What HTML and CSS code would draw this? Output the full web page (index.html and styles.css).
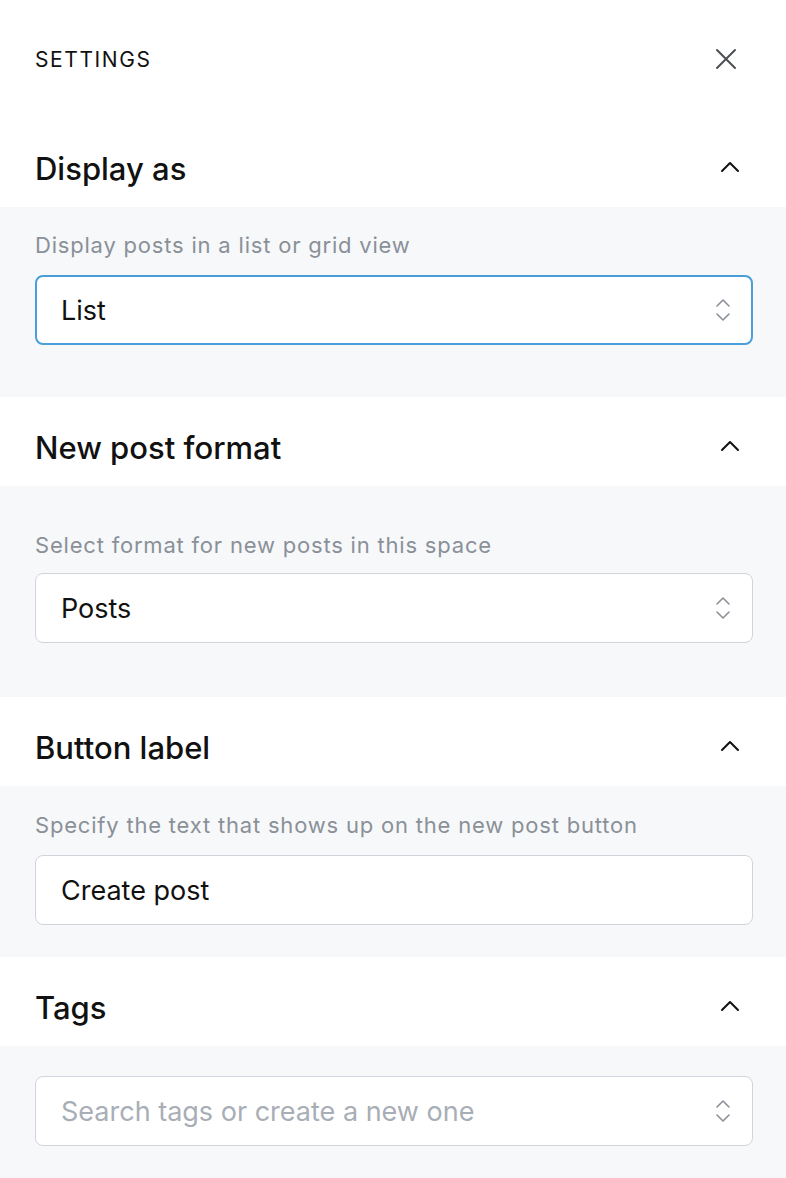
FILE: index.html
```html
<!DOCTYPE html>
<html lang="en">
<head>
    <meta charset="UTF-8">
    <meta name="viewport" content="width=device-width, initial-scale=1.0">
    <title>Settings</title>
    <link rel="stylesheet" href="styles.css">
</head>
<body>
    <div class="panel">
        <div class="panel-top">
            <span class="panel-title">SETTINGS</span>
            <button class="close-btn" type="button" aria-label="Close">
                <svg width="24" height="24" viewBox="0 0 24 24" fill="none" stroke="#4b5056" stroke-width="2" stroke-linecap="round">
                    <path d="M3 3L21 21M21 3L3 21"/>
                </svg>
            </button>
        </div>

        <div class="section">
            <div class="section-head">
                <h3>Display as</h3>
                <svg class="chevron" width="20" height="12" viewBox="0 0 20 12" fill="none" stroke="#111" stroke-width="2" stroke-linecap="round" stroke-linejoin="round">
                    <path d="M2 10L10 2L18 10"/>
                </svg>
            </div>
            <div class="section-body body-1">
                <label class="hint" for="display-as">Display posts in a list or grid view</label>
                <div class="field focused">
                    <select id="display-as">
                        <option>List</option>
                        <option>Grid</option>
                    </select>
                    <svg class="updown" width="16" height="24" viewBox="0 0 16 24" fill="none" stroke="#8b9098" stroke-width="1.6" stroke-linecap="round" stroke-linejoin="round">
                        <path d="M2 8L8 2L14 8M2 16L8 22L14 16"/>
                    </svg>
                </div>
            </div>
        </div>

        <div class="section">
            <div class="section-head">
                <h3>New post format</h3>
                <svg class="chevron" width="20" height="12" viewBox="0 0 20 12" fill="none" stroke="#111" stroke-width="2" stroke-linecap="round" stroke-linejoin="round">
                    <path d="M2 10L10 2L18 10"/>
                </svg>
            </div>
            <div class="section-body body-2">
                <label class="hint" for="post-format">Select format for new posts in this space</label>
                <div class="field">
                    <select id="post-format">
                        <option>Posts</option>
                        <option>Questions</option>
                    </select>
                    <svg class="updown" width="16" height="24" viewBox="0 0 16 24" fill="none" stroke="#8b9098" stroke-width="1.6" stroke-linecap="round" stroke-linejoin="round">
                        <path d="M2 8L8 2L14 8M2 16L8 22L14 16"/>
                    </svg>
                </div>
            </div>
        </div>

        <div class="section">
            <div class="section-head">
                <h3>Button label</h3>
                <svg class="chevron" width="20" height="12" viewBox="0 0 20 12" fill="none" stroke="#111" stroke-width="2" stroke-linecap="round" stroke-linejoin="round">
                    <path d="M2 10L10 2L18 10"/>
                </svg>
            </div>
            <div class="section-body body-3">
                <label class="hint" for="button-label">Specify the text that shows up on the new post button</label>
                <div class="field">
                    <input type="text" id="button-label" value="Create post">
                </div>
            </div>
        </div>

        <div class="section">
            <div class="section-head">
                <h3>Tags</h3>
                <svg class="chevron" width="20" height="12" viewBox="0 0 20 12" fill="none" stroke="#111" stroke-width="2" stroke-linecap="round" stroke-linejoin="round">
                    <path d="M2 10L10 2L18 10"/>
                </svg>
            </div>
            <div class="section-body body-4">
                <div class="field">
                    <input type="text" id="tags" placeholder="Search tags or create a new one">
                    <svg class="updown" width="16" height="24" viewBox="0 0 16 24" fill="none" stroke="#8b9098" stroke-width="1.6" stroke-linecap="round" stroke-linejoin="round">
                        <path d="M2 8L8 2L14 8M2 16L8 22L14 16"/>
                    </svg>
                </div>
            </div>
        </div>
    </div>
</body>
</html>
```

FILE: styles.css
```css
body {
    margin: 0;
    font-family: Inter, "Noto Sans", sans-serif;
    background-color: #fff;
    color: #111;
}

.panel {
    width: 786px;
}

.panel-top {
    display: flex;
    justify-content: space-between;
    align-items: center;
    height: 118px;
    padding: 0 48px 0 35px;
    box-sizing: border-box;
}

.panel-title {
    font-size: 21px;
    letter-spacing: 1.6px;
}

.close-btn {
    background: none;
    border: none;
    padding: 0;
    display: flex;
    cursor: pointer;
}

.section-head {
    display: flex;
    justify-content: space-between;
    align-items: center;
    height: 89px;
    padding: 12px 46px 0 35px;
    box-sizing: border-box;
}

.section-head h3 {
    margin: 0;
    font-size: 31px;
    font-weight: 500;
    line-height: 35px;
}

.chevron {
    margin-top: -4px;
}

.section-body {
    background-color: #f7f8fa;
    padding: 23px 33px 52px 35px;
}

.body-2 {
    padding-top: 44px;
    padding-bottom: 54px;
}

.body-3 {
    padding-top: 24px;
    padding-bottom: 32px;
}

.body-4 {
    padding-top: 30px;
    padding-bottom: 32px;
}

.hint {
    display: block;
    font-size: 22px;
    letter-spacing: 0.8px;
    line-height: 30px;
    color: #8a9098;
    margin-bottom: 15px;
}

.body-2 .hint {
    margin-bottom: 13px;
}

.field {
    display: flex;
    align-items: center;
    height: 70px;
    box-sizing: border-box;
    border: 1px solid #d1d5db;
    border-radius: 8px;
    background-color: #fff;
    padding: 0 21px 0 25px;
}

.field.focused {
    border: 2px solid #4a9ed9;
    padding-left: 24px;
    padding-right: 20px;
}

select, input {
    flex: 1;
    border: none;
    outline: none;
    background: transparent;
    appearance: none;
    -webkit-appearance: none;
    font-family: inherit;
    font-size: 27px;
    color: #111;
    padding: 0;
    margin: 0;
}

input::placeholder {
    color: #a8aeb6;
}

.updown {
    flex-shrink: 0;
}
```
